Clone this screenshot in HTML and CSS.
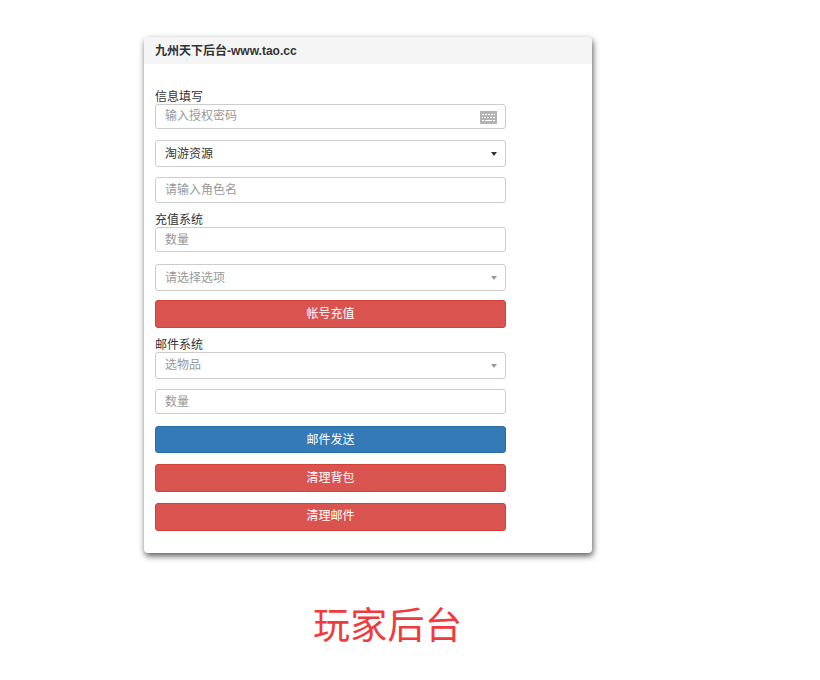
FILE: index.html
```html
<!DOCTYPE html>
<html lang="zh-CN">
<head>
    <meta charset="UTF-8">
    <title>玩家后台</title>
    <link rel="stylesheet" href="styles.css">
</head>
<body>
    <div class="panel">
        <div class="panel-heading">九州天下后台-www.tao.cc</div>
        <form class="panel-body">
            <label class="field-label">信息填写</label>
            <div class="input-wrap gap-11">
                <input class="control raised-text" type="text" placeholder="输入授权密码">
                <svg class="keyboard" width="17" height="13" viewBox="0 0 17 13">
                    <rect width="17" height="13" fill="#b3b3b3"/>
                    <path d="M2 3.5h2M5 3.5h2M8 3.5h2M11 3.5h2M14 3.5h1M2 6.5h1M4 6.5h2M7 6.5h2M10 6.5h2M13 6.5h2M2 9.5h2M5 9.5h7M13 9.5h2" stroke="#fff" stroke-width="1" fill="none"/>
                </svg>
            </div>
            <div class="control select gap-10"><span>淘游资源</span><i class="caret"></i></div>
            <input class="control tall gap-10" type="text" placeholder="请输入角色名">

            <label class="field-label">充值系统</label>
            <input class="control gap-12" type="text" placeholder="数量">
            <div class="control select muted gap-9"><span>请选择选项</span><i class="caret"></i></div>
            <button class="btn btn-danger gap-10" type="button">帐号充值</button>

            <label class="field-label">邮件系统</label>
            <div class="control select muted raised gap-10"><span>选物品</span><i class="caret"></i></div>
            <input class="control gap-12" type="text" placeholder="数量">
            <button class="btn btn-primary short gap-11" type="button">邮件发送</button>
            <button class="btn btn-danger gap-11" type="button">清理背包</button>
            <button class="btn btn-danger last" type="button">清理邮件</button>
        </form>
    </div>
    <h1 class="page-title">玩家后台</h1>
</body>
</html>
```

FILE: styles.css
```css
html, body {
    margin: 0;
    background: #fff;
}

body {
    width: 820px;
    padding-top: 37px;
    box-sizing: border-box;
    font-family: "Liberation Sans", "Noto Sans CJK SC", sans-serif;
    font-size: 12px;
    color: #333;
}

.panel {
    width: 448px;
    margin-left: 144px;
    background: #fff;
    border-radius: 4px;
    box-shadow: 1px 3px 6px rgba(0, 0, 0, 0.65);
    overflow: hidden;
}

.panel-heading {
    height: 27px;
    line-height: 28px;
    padding: 0 11px;
    background: #f5f5f5;
    font-size: 12px;
    font-weight: bold;
}

.panel-body {
    display: flex;
    flex-direction: column;
    width: 351px;
    padding: 26px 11px 22px;
}

.field-label {
    height: 14px;
    line-height: 14px;
    color: #333;
}

.input-wrap {
    position: relative;
    display: flex;
}

.input-wrap .control {
    flex: 1;
}

.keyboard {
    position: absolute;
    right: 9px;
    top: 7px;
}

.control {
    display: block;
    box-sizing: border-box;
    width: 100%;
    height: 25px;
    padding: 0 9px;
    border: 1px solid #ccc;
    border-radius: 3px;
    background: #fff;
    font: inherit;
    color: #333;
    outline: none;
}

.control::placeholder {
    color: #999;
    opacity: 1;
}

.control.tall {
    height: 26px;
}

.control.raised-text {
    padding-bottom: 1px;
}

.select {
    display: flex;
    align-items: center;
    justify-content: space-between;
    height: 27px;
    padding-bottom: 2px;
}

.select .caret {
    width: 0;
    height: 0;
    margin-top: 2px;
    margin-right: -1px;
    border-top: 4px solid #333;
    border-left: 3px solid transparent;
    border-right: 3px solid transparent;
}

.select.muted {
    color: #999;
}

.select.muted .caret {
    border-top-color: #999;
}

.select.raised {
    padding-bottom: 4px;
}

.select.raised .caret {
    margin-top: 4px;
}

.btn {
    display: block;
    width: 100%;
    height: 28px;
    padding: 0 0 3px;
    border: 1px solid transparent;
    border-radius: 3px;
    font: inherit;
    color: #fff;
    text-align: center;
}

.btn.short {
    height: 27px;
}

.btn.last {
    padding-bottom: 5px;
}

.btn-danger {
    background: #d9534f;
    border-color: #d43f3a;
}

.btn-primary {
    background: #337ab7;
    border-color: #2e6da4;
}

.gap-9 { margin-bottom: 9px; }
.gap-10 { margin-bottom: 10px; }
.gap-11 { margin-bottom: 11px; }
.gap-12 { margin-bottom: 12px; }

.page-title {
    width: 148px;
    margin: 52px 0 0 313px;
    font-size: 37px;
    letter-spacing: 0.3px;
    line-height: 44px;
    font-weight: normal;
    white-space: nowrap;
    color: #f23a3c;
}
```
